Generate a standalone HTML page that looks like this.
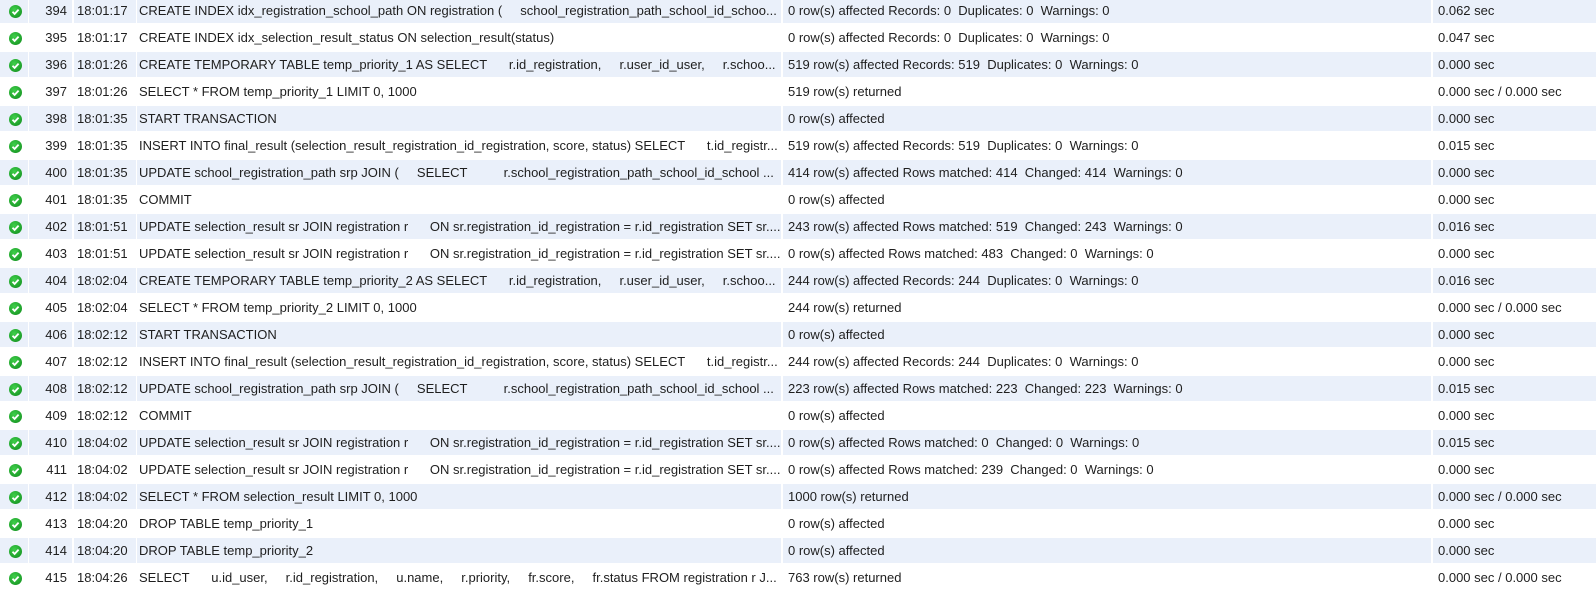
<!DOCTYPE html><html><head><style>
body{margin:0;width:1596px;height:596px;overflow:hidden;background:#fff;font-family:Tahoma,"Liberation Sans",sans-serif;font-size:13px;color:#1e1e1e;position:relative}
.r{position:absolute;left:0;width:1596px;height:25px}
.b .c{background:#eaf0fa}
.c{position:absolute;top:0;height:25px;line-height:25px;white-space:nowrap;overflow:hidden}
.ic{position:absolute;left:9px;top:7px;width:13px;height:13px;border-radius:50%;background:radial-gradient(circle at 40% 35%,#3fcf4a,#0f8a1c)}
.ic svg{position:absolute;left:0;top:0}
</style></head><body>
<div id="t"></div>
<script>
const d=[
[394,"18:01:17","CREATE INDEX idx_registration_school_path ON registration (&nbsp;&nbsp;&nbsp;&nbsp; school_registration_path_school_id_schoo...","0 row(s) affected Records: 0&nbsp; Duplicates: 0&nbsp; Warnings: 0","0.062 sec"],
[395,"18:01:17","CREATE INDEX idx_selection_result_status ON selection_result(status)","0 row(s) affected Records: 0&nbsp; Duplicates: 0&nbsp; Warnings: 0","0.047 sec"],
[396,"18:01:26","CREATE TEMPORARY TABLE temp_priority_1 AS SELECT&nbsp;&nbsp;&nbsp;&nbsp;&nbsp; r.id_registration,&nbsp;&nbsp;&nbsp;&nbsp; r.user_id_user,&nbsp;&nbsp;&nbsp;&nbsp; r.schoo...","519 row(s) affected Records: 519&nbsp; Duplicates: 0&nbsp; Warnings: 0","0.000 sec"],
[397,"18:01:26","SELECT * FROM temp_priority_1 LIMIT 0, 1000","519 row(s) returned","0.000 sec / 0.000 sec"],
[398,"18:01:35","START TRANSACTION","0 row(s) affected","0.000 sec"],
[399,"18:01:35","INSERT INTO final_result (selection_result_registration_id_registration, score, status) SELECT&nbsp;&nbsp;&nbsp;&nbsp;&nbsp; t.id_registr...","519 row(s) affected Records: 519&nbsp; Duplicates: 0&nbsp; Warnings: 0","0.015 sec"],
[400,"18:01:35","UPDATE school_registration_path srp JOIN (&nbsp;&nbsp;&nbsp;&nbsp; SELECT&nbsp;&nbsp;&nbsp;&nbsp;&nbsp;&nbsp;&nbsp;&nbsp;&nbsp; r.school_registration_path_school_id_school ...","414 row(s) affected Rows matched: 414&nbsp; Changed: 414&nbsp; Warnings: 0","0.000 sec"],
[401,"18:01:35","COMMIT","0 row(s) affected","0.000 sec"],
[402,"18:01:51","UPDATE selection_result sr JOIN registration r&nbsp;&nbsp;&nbsp;&nbsp;&nbsp; ON sr.registration_id_registration = r.id_registration SET sr....","243 row(s) affected Rows matched: 519&nbsp; Changed: 243&nbsp; Warnings: 0","0.016 sec"],
[403,"18:01:51","UPDATE selection_result sr JOIN registration r&nbsp;&nbsp;&nbsp;&nbsp;&nbsp; ON sr.registration_id_registration = r.id_registration SET sr....","0 row(s) affected Rows matched: 483&nbsp; Changed: 0&nbsp; Warnings: 0","0.000 sec"],
[404,"18:02:04","CREATE TEMPORARY TABLE temp_priority_2 AS SELECT&nbsp;&nbsp;&nbsp;&nbsp;&nbsp; r.id_registration,&nbsp;&nbsp;&nbsp;&nbsp; r.user_id_user,&nbsp;&nbsp;&nbsp;&nbsp; r.schoo...","244 row(s) affected Records: 244&nbsp; Duplicates: 0&nbsp; Warnings: 0","0.016 sec"],
[405,"18:02:04","SELECT * FROM temp_priority_2 LIMIT 0, 1000","244 row(s) returned","0.000 sec / 0.000 sec"],
[406,"18:02:12","START TRANSACTION","0 row(s) affected","0.000 sec"],
[407,"18:02:12","INSERT INTO final_result (selection_result_registration_id_registration, score, status) SELECT&nbsp;&nbsp;&nbsp;&nbsp;&nbsp; t.id_registr...","244 row(s) affected Records: 244&nbsp; Duplicates: 0&nbsp; Warnings: 0","0.000 sec"],
[408,"18:02:12","UPDATE school_registration_path srp JOIN (&nbsp;&nbsp;&nbsp;&nbsp; SELECT&nbsp;&nbsp;&nbsp;&nbsp;&nbsp;&nbsp;&nbsp;&nbsp;&nbsp; r.school_registration_path_school_id_school ...","223 row(s) affected Rows matched: 223&nbsp; Changed: 223&nbsp; Warnings: 0","0.015 sec"],
[409,"18:02:12","COMMIT","0 row(s) affected","0.000 sec"],
[410,"18:04:02","UPDATE selection_result sr JOIN registration r&nbsp;&nbsp;&nbsp;&nbsp;&nbsp; ON sr.registration_id_registration = r.id_registration SET sr....","0 row(s) affected Rows matched: 0&nbsp; Changed: 0&nbsp; Warnings: 0","0.015 sec"],
[411,"18:04:02","UPDATE selection_result sr JOIN registration r&nbsp;&nbsp;&nbsp;&nbsp;&nbsp; ON sr.registration_id_registration = r.id_registration SET sr....","0 row(s) affected Rows matched: 239&nbsp; Changed: 0&nbsp; Warnings: 0","0.000 sec"],
[412,"18:04:02","SELECT * FROM selection_result LIMIT 0, 1000","1000 row(s) returned","0.000 sec / 0.000 sec"],
[413,"18:04:20","DROP TABLE temp_priority_1","0 row(s) affected","0.000 sec"],
[414,"18:04:20","DROP TABLE temp_priority_2","0 row(s) affected","0.000 sec"],
[415,"18:04:26","SELECT&nbsp;&nbsp;&nbsp;&nbsp;&nbsp; u.id_user,&nbsp;&nbsp;&nbsp;&nbsp; r.id_registration,&nbsp;&nbsp;&nbsp;&nbsp; u.name,&nbsp;&nbsp;&nbsp;&nbsp; r.priority,&nbsp;&nbsp;&nbsp;&nbsp; fr.score,&nbsp;&nbsp;&nbsp;&nbsp; fr.status FROM registration r J...","763 row(s) returned","0.000 sec / 0.000 sec"]];
let h="";
d.forEach((r,i)=>{
 const top=-2+i*27;
 h+=`<div class="r${i%2==0?' b':''}" style="top:${top}px">
<div class="c" style="left:0;width:28px"><div class="ic"><svg width="13" height="13"><path d="M3.5 6.8 L5.6 8.9 L9.6 4.6" stroke="#fff" stroke-width="1.8" fill="none"/></svg></div></div>
<div class="c" style="left:29px;width:38px;text-align:right;padding-right:5px">${r[0]}</div>
<div class="c" style="left:74px;width:62px;padding-left:3px;box-sizing:border-box">${r[1]}</div>
<div class="c" style="left:137px;width:644px;padding-left:2px;box-sizing:border-box">${r[2]}</div>
<div class="c" style="left:783px;width:648px;padding-left:5px;box-sizing:border-box">${r[3]}</div>
<div class="c" style="left:1433px;width:163px;padding-left:5px;box-sizing:border-box">${r[4]}</div></div>`;
});
document.getElementById("t").innerHTML=h;
</script>
</body></html>
